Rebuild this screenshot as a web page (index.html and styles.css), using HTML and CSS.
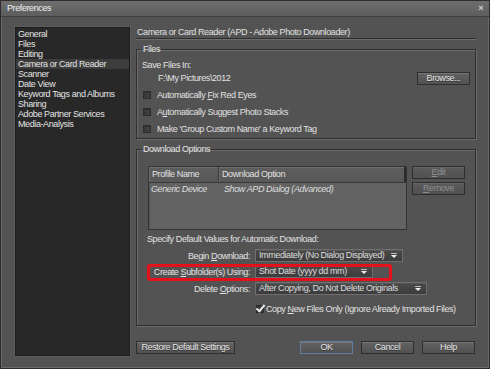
FILE: index.html
```html
<!DOCTYPE html>
<html lang="en">
<head>
    <meta charset="utf-8">
    <title>Preferences</title>
    <link rel="stylesheet" href="styles.css">
</head>
<body>
    <div class="window">
        <div class="titlebar">
            <span class="title">Preferences</span>
            <span class="close">&#215;</span>
        </div>
        <div class="content">
            <ul class="nav">
                <li>General</li>
                <li>Files</li>
                <li>Editing</li>
                <li class="sel">Camera or Card Reader</li>
                <li>Scanner</li>
                <li>Date View</li>
                <li>Keyword Tags and Albums</li>
                <li>Sharing</li>
                <li>Adobe Partner Services</li>
                <li>Media-Analysis</li>
            </ul>

            <div class="panel">
                <div class="heading">Camera or Card Reader (APD - Adobe Photo Downloader)</div>

                <fieldset class="group files">
                    <legend>Files</legend>
                    <div class="line save">Save Files In:</div>
                    <div class="path-row">
                        <span class="path">F:\My Pictures\2012</span>
                        <button class="btn browse">Browse...</button>
                    </div>
                    <label class="check"><span class="box"></span><span>Automatically <u>F</u>ix Red Eyes</span></label>
                    <label class="check"><span class="box"></span><span>A<u>u</u>tomatically Suggest Photo Stacks</span></label>
                    <label class="check"><span class="box"></span><span>Make 'Group Custom Name' a Keyword Tag</span></label>
                </fieldset>

                <fieldset class="group download">
                    <legend>Download Options</legend>
                    <div class="profiles">
                        <div class="table">
                            <div class="thead">
                                <span class="c1">Profile Name</span>
                                <span class="c2">Download Option</span>
                            </div>
                            <div class="trow">
                                <span class="c1">Generic Device</span>
                                <span class="c2">Show APD Dialog (Advanced)</span>
                            </div>
                        </div>
                        <div class="side-btns">
                            <button class="btn off"><u>E</u>dit</button>
                            <button class="btn off"><u>R</u>emove</button>
                        </div>
                    </div>
                    <div class="line specify">Specify Default Values for Automatic Download:</div>
                    <div class="field begin">
                        <span class="label">Begin <u>D</u>ownload:</span>
                        <span class="select w-begin">Immediately (No Dialog Displayed)</span>
                    </div>
                    <div class="field subfolder marked">
                        <span class="label">Create <u>S</u>ubfolder(s) Using:</span>
                        <span class="select w-sub">Shot Date (yyyy dd mm)</span>
                    </div>
                    <div class="field delete">
                        <span class="label">Delete <u>O</u>ptions:</span>
                        <span class="select w-del">After Copying, Do Not Delete Originals</span>
                    </div>
                    <label class="check copy"><span class="box on"></span><span>Copy <u>N</u>ew Files Only (Ignore Already Imported Files)</span></label>
                </fieldset>

                <div class="footer">
                    <button class="btn restore">Restore Default Settings</button>
                    <button class="btn ok">OK</button>
                    <button class="btn">Cancel</button>
                    <button class="btn">Help</button>
                </div>
            </div>
        </div>
    </div>
</body>
</html>
```

FILE: styles.css
```css
html,
body {
    margin: 0;
    padding: 0;
    background: #535353;
}

body {
    font-family: "Liberation Sans", Arial, sans-serif;
    font-size: 9px;
    letter-spacing: -0.4px;
    color: #e2e2e2;
}

u {
    text-decoration: underline;
    text-underline-offset: 1px;
}

.window {
    width: 490px;
    height: 369px;
    box-sizing: border-box;
    border: 1px solid #2c2c2c;
    background: #535353;
    box-shadow: inset 0 0 0 1px #6a6a6a;
    display: flex;
    flex-direction: column;
}

.titlebar {
    height: 16px;
    box-sizing: border-box;
    border-bottom: 1px solid #3e3e3e;
    background: linear-gradient(#6e6e6e, #5d5d5d);
    display: flex;
    align-items: center;
    justify-content: space-between;
    padding: 0 6px 0 6px;
    line-height: 15px;
}

.title {
    color: #f0f0f0;
}

.close {
    font-size: 9px;
    font-weight: bold;
    color: #d0d0d0;
}

.content {
    flex: 1;
    display: flex;
    gap: 6px;
    padding: 10px 13px 12px 14px;
}

/* left list */
.nav {
    list-style: none;
    margin: 0;
    padding: 1px 0 0 0;
    width: 115px;
    box-sizing: border-box;
    background: #282828;
    border: 1px solid #1d1d1d;
    box-shadow: 0 0 0 1px #5c5c5c;
}

.nav li {
    line-height: 10px;
    height: 10px;
    padding-left: 2px;
    color: #e4e4e4;
    white-space: nowrap;
}

.nav li.sel {
    background: #3c3c3c;
}

/* right side */
.panel {
    width: 340px;
    display: flex;
    flex-direction: column;
}

.heading {
    height: 11px;
    line-height: 11px;
    padding-left: 1px;
    border-bottom: 1px solid #2e2e2e;
    box-shadow: 0 1px 0 #6c6c6c;
    white-space: nowrap;
}

.group {
    margin: 0;
    padding: 0 5px;
    border: 1px solid #2f2f2f;
    box-shadow: inset 1px 1px 0 #6b6b6b, 1px 1px 0 #6b6b6b;
    min-width: 0;
}

.group legend {
    padding: 0 1px;
    line-height: 12px;
    height: 12px;
}

.files {
    margin-top: 4px;
    padding-bottom: 3px;
}

.download {
    margin-top: 4px;
    padding-bottom: 10px;
}

.line {
    height: 12px;
    line-height: 12px;
    white-space: nowrap;
}

.save {
    margin-top: 4px;
}

.path-row {
    margin-top: 1px;
    height: 12px;
    display: flex;
    align-items: center;
    justify-content: space-between;
}

.path {
    padding-left: 16px;
}

/* buttons */
.btn {
    font: inherit;
    letter-spacing: inherit;
    color: #e6e6e6;
    height: 13px;
    width: 53px;
    padding: 0;
    line-height: 11px;
    box-sizing: border-box;
    border: 1px solid #2e2e2e;
    background: linear-gradient(#626262, #525252);
    box-shadow: inset 0 1px 0 #747474;
    text-shadow: 0 1px 0 #333;
    text-align: center;
    white-space: nowrap;
}

.btn.off {
    color: #8e8e8e;
    text-shadow: none;
    background: linear-gradient(#5b5b5b, #515151);
    box-shadow: inset 0 1px 0 #666;
}

/* checkboxes */
.check {
    display: flex;
    align-items: center;
    height: 12px;
    margin-top: 5px;
    white-space: nowrap;
}

.box {
    flex: none;
    width: 8px;
    height: 8px;
    box-sizing: border-box;
    margin: 0 6px 0 1px;
    background: #3d3d3d;
    border: 1px solid #2c2c2c;
    box-shadow: inset 1px 1px 0 #333;
    position: relative;
}

.box.on::after {
    content: "";
    position: absolute;
    left: 1px;
    top: -3px;
    width: 3px;
    height: 7px;
    border: solid #e8e8e8;
    border-width: 0 2px 2px 0;
    transform: rotate(40deg);
}

/* profile table */
.profiles {
    display: flex;
    gap: 5px;
    margin-top: 11px;
    padding-left: 6px;
}

.table {
    width: 259px;
    height: 64px;
    box-sizing: border-box;
    background: #626262;
    border: 1px solid #333;
    box-shadow: inset 1px 1px 0 #545454;
}

.thead {
    display: flex;
    height: 16px;
    box-sizing: border-box;
    background: linear-gradient(#5e5e5e, #585858);
    border-bottom: 1px solid #3a3a3a;
}

.thead span {
    line-height: 15px;
    padding-left: 3px;
    box-sizing: border-box;
    box-shadow: inset 1px 1px 0 #6e6e6e;
    border-right: 1px solid #3a3a3a;
}

.thead .c2 {
    flex: 1;
    border-right: 2px solid #2a2a2a;
}

.c1 {
    width: 70px;
}

.trow {
    display: flex;
    font-style: italic;
    line-height: 12px;
    color: #dedede;
}

.trow span {
    padding-left: 2px;
}

.trow .c2 {
    padding-left: 3px;
}

.side-btns {
    display: flex;
    flex-direction: column;
    gap: 3px;
}

.specify {
    margin-top: 3px;
    padding-left: 5px;
}

/* select rows */
.field {
    display: flex;
    align-items: center;
    gap: 5px;
    height: 13px;
    position: relative;
}

.begin {
    margin-top: 4px;
}

.subfolder {
    margin-top: 3px;
}

.delete {
    margin-top: 4px;
}

.label {
    width: 108px;
    text-align: right;
    white-space: nowrap;
}

.select {
    height: 13px;
    box-sizing: border-box;
    line-height: 11px;
    padding-left: 3px;
    border: 1px solid #6f6f6f;
    background: linear-gradient(#4a4a4a, #3c3c3c);
    box-shadow: inset 0 1px 0 #555;
    color: #dcdcdc;
    white-space: nowrap;
    position: relative;
}

.select::after {
    content: "";
    position: absolute;
    right: 5px;
    top: 5px;
    width: 0;
    height: 0;
    border-left: 3px solid transparent;
    border-right: 3px solid transparent;
    border-top: 3px solid #f0f0f0;
}

.select::before {
    content: "";
    position: absolute;
    right: 5px;
    top: 3px;
    width: 6px;
    height: 1px;
    background: #bdbdbd;
}

.w-begin {
    width: 148px;
}

.w-sub {
    width: 118px;
}

.w-del {
    width: 172px;
}

/* red annotation box */
.marked::after {
    content: "";
    position: absolute;
    left: 5px;
    top: -1px;
    width: 245px;
    height: 17px;
    box-sizing: border-box;
    border: 3px solid #e4111a;
    border-radius: 3px;
}

.copy {
    margin-top: 8px;
    padding-left: 113px;
}

.copy .box {
    margin-right: 2px;
}

/* footer */
.footer {
    display: flex;
    gap: 8px;
    margin-top: 15px;
    padding-right: 1px;
}

.restore {
    width: 99px;
    margin-right: auto;
}

.ok {
    border-color: #5f7f9e;
}
```
